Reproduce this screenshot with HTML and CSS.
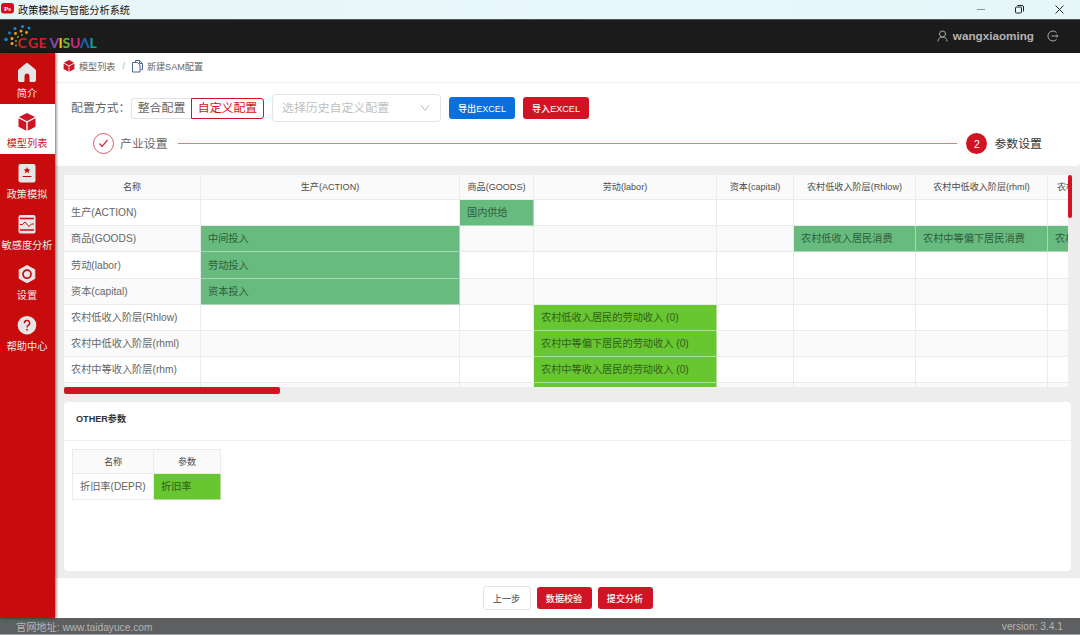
FILE: index.html
```
<!DOCTYPE html>
<html lang="zh-CN">

<head>
  <meta charset="UTF-8" />
  <meta name="viewport" content="width=device-width, initial-scale=1.0"/>
  <title>政策模拟与智能分析系统</title>
  <link rel="stylesheet" href="styles.css">
</head>

<body>

  <!-- Window title bar -->
  <div class="titlebar">
    <svg class="app-icon" width="13" height="12" viewBox="0 0 13 12"><rect width="13" height="10.500" rx="3" fill="#d00f1c"/><text x="6.500" y="7.700" text-anchor="middle" class="app-icon-text">Ps</text></svg>
    <span class="window-title">政策模拟与智能分析系统</span>
    <svg class="window-buttons" width="90" height="19" viewBox="0 0 90 19" fill="none" stroke="#222">
      <path d="M1 9.500h8" stroke="#8b9698"/>
      <rect x="39.500" y="7" width="6" height="6" rx="1"/>
      <path d="M41.500 5.500h4.500q1.500 0 1.500 1.500v4.500"/>
      <path d="M79.500 5.500l8 8M87.500 5.500l-8 8"/>
    </svg>
  </div>

  <header>
    <svg class="logo" width="100" height="33" viewBox="0 0 100 33">
      <g fill="#1788d8"><circle cx="6" cy="19.500" r="1.800"/><circle cx="9.500" cy="13" r="1.400"/><circle cx="15" cy="8.500" r="1.500"/><circle cx="22.500" cy="6.500" r="1.600"/><circle cx="29" cy="8" r="1.500"/></g>
      <g fill="#f5a316"><circle cx="12" cy="18.500" r="1.500"/><circle cx="15.500" cy="13.500" r="1.400"/><circle cx="21" cy="11" r="1.500"/><circle cx="26.500" cy="12.500" r="1.400"/><circle cx="12" cy="23.500" r="1.500"/></g>
      <g fill="#72b52b"><circle cx="16" cy="21" r="1"/><circle cx="18" cy="17" r="1"/><circle cx="22" cy="15" r=".9"/><circle cx="16" cy="25.500" r="1"/></g>
      <text y="28" class="logo-text">
        <tspan x="17.500" fill="#d81e2c">C</tspan><tspan x="28" fill="#d81e2c">G</tspan><tspan x="38.500" fill="#d81e2c">E</tspan>
        <tspan x="49.500" fill="#9147a8">V</tspan><tspan x="58.500" fill="#f4c51c">I</tspan><tspan x="62.500" fill="#69b52c">S</tspan><tspan x="70" fill="#d52783">U</tspan><tspan x="80" fill="#1666b8">Λ</tspan><tspan x="89.500" fill="#13a0a5">L</tspan>
      </text>
    </svg>
    <div class="user">
      <svg width="11" height="12" viewBox="0 0 11 12" fill="none" stroke="#aaa"><circle cx="5.500" cy="4" r="3"/><path d="M1 11.500c0-3 2-4.500 4.500-4.500s4.500 1.500 4.500 4.500"/></svg>
      <span class="username">wangxiaoming</span>
      <svg width="13" height="12" viewBox="0 0 13 12" fill="none" stroke="#aaa"><path d="M10.500 2.500a5 5 0 1 0 0 7M5.500 6h6.500M10.500 4.500l1.500 1.500-1.500 1.500"/></svg>
    </div>
  </header>

  <div class="layout">
    <nav>
      <a class="nav-item">
        <svg width="20" height="20" viewBox="0 0 20 20"><path d="M10 1L1.500 8v10.500q0 1 1 1H7v-5.500a3 3 0 0 1 6 0v5.500h4.500q1 0 1-1V8z" fill="#e6e6e6" stroke="#e6e6e6" stroke-linejoin="round"/></svg>
        <span>简介</span>
      </a>
      <a class="nav-item active">
        <svg width="20" height="20" viewBox="0 0 20 20" fill="#d01423"><path d="M10 1l8 4-8 4.200L2 5zM1.500 6.300l7.800 4v8.500L1.500 14.700zM18.500 6.300l-7.800 4v8.500l7.800-4.100z"/></svg>
        <span>模型列表</span>
      </a>
      <a class="nav-item">
        <svg width="20" height="20" viewBox="0 0 20 20"><rect x="1.500" y="1" width="17" height="18.500" rx="2" fill="#e6e6e6"/><path d="M10 4l1 2.200 2.400.2-1.800 1.600.5 2.300L10 9.100l-2.100 1.200.5-2.300-1.800-1.600L9 6.200z" fill="#c80b0d"/><path d="M5.500 13.500h9" stroke="#c80b0d"/></svg>
        <span>政策模拟</span>
      </a>
      <a class="nav-item">
        <svg width="20" height="20" viewBox="0 0 20 20" fill="none" stroke="#c80b0d"><rect x="1.500" y="1" width="17" height="18.500" rx="2" fill="#e6e6e6" stroke="none"/><path d="M3 4.500h14M3 16h14" stroke-width="1.300"/><path d="M3 10.500h2.500l2.500-2.500 4 4.500 2.500-2.500H17"/></svg>
        <span>敏感度分析</span>
      </a>
      <a class="nav-item">
        <svg width="20" height="20" viewBox="0 0 20 20"><path d="M10 1.500l7.800 4.300v8.700L10 18.800l-7.800-4.300V5.800z" fill="#e6e6e6" stroke="#e6e6e6" stroke-linejoin="round"/><circle cx="10" cy="10.200" r="4" fill="none" stroke="#c80b0d" stroke-width="1.700"/></svg>
        <span>设置</span>
      </a>
      <a class="nav-item">
        <svg width="20" height="20" viewBox="0 0 20 20"><circle cx="10" cy="10.200" r="9.300" fill="#e6e6e6"/><path d="M7.400 8.200a2.600 2.600 0 1 1 3.800 2.200q-1.200.6-1.200 2" fill="none" stroke="#c80b0d" stroke-width="1.400"/><circle cx="10" cy="14.700" r=".9" fill="#c80b0d"/></svg>
        <span>帮助中心</span>
      </a>
    </nav>

    <main>
      <div class="breadcrumb">
        <svg width="12" height="12" viewBox="0 0 20 20" fill="#d01423"><path d="M10 0l8.500 4.500L10 9 1.500 4.500zM1 6l8.300 4.300v9.200L1 15zM19 6l-8.300 4.300v9.200L19 15z"/></svg>
        <span>模型列表</span>
        <span class="slash">/</span>
        <svg width="11" height="13" viewBox="0 0 11 13" fill="none" stroke="#4c6896"><path d="M3.500 2.500V.5h4l3 3v6h-2M7.500.5v3h3"/><path d="M.5 2.500h5l2.500 2.500v7H.5z"/></svg>
        <span>新建SAM配置</span>
      </div>

      <section class="config">
        <div class="config-row">
          <span class="config-label">配置方式：</span>
          <div class="radio-group">
            <span class="radio">整合配置</span>
            <span class="radio checked">自定义配置</span>
          </div>
          <div class="select">
            <span>选择历史自定义配置</span>
            <svg width="10" height="8" viewBox="0 0 10 8" fill="none" stroke="#bbb"><path d="M1 1l4 5.500L9 1"/></svg>
          </div>
          <button class="btn blue">导出EXCEL</button>
          <button class="btn red">导入EXCEL</button>
        </div>
        <div class="steps">
          <span class="step-icon done"><svg width="11" height="9" viewBox="0 0 11 9" fill="none" stroke="#d6303e" stroke-width="1.300"><path d="M1.500 4.500L4 7.500 9.500 1"/></svg></span>
          <span class="step-title">产业设置</span>
          <span class="step-line"></span>
          <span class="step-icon current">2</span>
          <span class="step-title now">参数设置</span>
        </div>
      </section>

      <!-- SAM matrix -->
      <section class="matrix">
        <div class="table-view">
          <table class="sam">
            <colgroup><col class="c-name"><col class="c-action"><col class="c-goods"><col class="c-labor"><col class="c-capital"><col class="c-low"><col class="c-rhml"><col class="c-rhm"></colgroup>
            <thead>
              <tr><th>名称</th><th>生产(ACTION)</th><th>商品(GOODS)</th><th>劳动(labor)</th><th>资本(capital)</th><th>农村低收入阶层(Rhlow)</th><th>农村中低收入阶层(rhml)</th><th class="cut">农村</th></tr>
            </thead>
            <tbody>
              <tr><td>生产(ACTION)</td><td></td><td class="green">国内供给</td><td></td><td></td><td></td><td></td><td></td></tr>
              <tr><td>商品(GOODS)</td><td class="green">中间投入</td><td></td><td></td><td></td><td class="green">农村低收入居民消费</td><td class="green">农村中等偏下居民消费</td><td class="green">农村</td></tr>
              <tr class="tall"><td>劳动(labor)</td><td class="green">劳动投入</td><td></td><td></td><td></td><td></td><td></td><td></td></tr>
              <tr><td>资本(capital)</td><td class="green">资本投入</td><td></td><td></td><td></td><td></td><td></td><td></td></tr>
              <tr><td>农村低收入阶层(Rhlow)</td><td></td><td></td><td class="lime">农村低收入居民的劳动收入 (0)</td><td></td><td></td><td></td><td></td></tr>
              <tr><td>农村中低收入阶层(rhml)</td><td></td><td></td><td class="lime">农村中等偏下居民的劳动收入 (0)</td><td></td><td></td><td></td><td></td></tr>
              <tr><td>农村中等收入阶层(rhm)</td><td></td><td></td><td class="lime">农村中等收入居民的劳动收入 (0)</td><td></td><td></td><td></td><td></td></tr>
              <tr><td></td><td></td><td></td><td class="lime"></td><td></td><td></td><td></td><td></td></tr>
            </tbody>
          </table>
        </div>
        <div class="scroll-v"></div>
        <div class="scroll-h"></div>
      </section>

      <section class="card">
        <h2>OTHER参数</h2>
        <div class="card-body">
          <table class="other">
            <colgroup><col class="c-depr"><col class="c-value"></colgroup>
            <thead><tr><th>名称</th><th>参数</th></tr></thead>
            <tbody><tr><td>折旧率(DEPR)</td><td class="lime">折旧率</td></tr></tbody>
          </table>
        </div>
      </section>

      <div class="actions">
        <button class="btn plain">上一步</button>
        <button class="btn red">数据校验</button>
        <button class="btn red">提交分析</button>
      </div>
    </main>
  </div>

  <footer>
    <span>官网地址: www.taidayuce.com</span>
    <span>version: 3.4.1</span>
  </footer>

</body>
</html>
```
FILE: styles.css
```
:root {
  --red: #d01423;
  --nav-red: #c80b0d;
  --green: #68bb7f;
  --lime: #68c630;
  --line: #ebebeb;
}

* {
  margin: 0;
  padding: 0;
  box-sizing: border-box;
}

body {
  width: 1080px;
  height: 635px;
  overflow: hidden;
  display: flex;
  flex-direction: column;
  font-family: 'Liberation Sans', 'Noto Sans CJK SC', sans-serif;
  font-size: 10.2px;
  color: #666;
  background: #fff;
}

svg {
  flex: none;
  display: block;
}

.titlebar {
  height: 19px;
  flex: none;
  display: flex;
  align-items: center;
  background: linear-gradient(90deg, #e7f4f6, #e9f8fc 50%, #e6f5f8);
  padding: 0 14px 1px 1px;
  color: #111;
}

.app-icon-text {
  font: bold 7px 'Liberation Serif', serif;
  fill: #fff;
}

.window-title {
  margin-left: 4px;
  flex: 1;
}

header {
  height: 34px;
  flex: none;
  display: flex;
  justify-content: space-between;
  background: #1b1b1b;
  border-top: 1px solid #4d5657;
  padding-right: 21px;
}

.logo-text {
  font-family: Lato, 'Liberation Sans', sans-serif;
  font-size: 14px;
  font-weight: bold;
}

.user {
  display: flex;
  align-items: center;
  padding-bottom: 2px;
  color: #b3b3b3;
}

.username {
  font-size: 11.7px;
  font-weight: bold;
  margin: 0 12px 0 5px;
}

.layout {
  flex: 1;
  min-height: 0;
  display: flex;
}

nav {
  width: 55px;
  flex: none;
  background: var(--nav-red);
  box-shadow: 1px 0 3px rgba(0, 0, 0, 0.6);
  z-index: 1;
}

.nav-item {
  height: 50.7px;
  display: flex;
  flex-direction: column;
  align-items: center;
  padding: 8.5px 1px 0 0;
  color: #eee;
  line-height: 15px;
  white-space: nowrap;
}

.nav-item span {
  margin-top: 4px;
}

.nav-item.active {
  background: #fff;
  color: var(--red);
}

main {
  flex: 1;
  min-width: 0;
  display: flex;
  flex-direction: column;
  background: #ededed;
}

.breadcrumb {
  height: 30px;
  flex: none;
  display: flex;
  align-items: center;
  background: #fff;
  border-bottom: 1px solid #f0f0f0;
  padding: 0 0 3px 8px;
  font-size: 9.1px;
}

.breadcrumb span {
  margin-left: 4px;
}

.breadcrumb .slash {
  margin: 0 7px;
  color: #aaa;
}

.config {
  height: 83px;
  flex: none;
  background: #fff;
  padding: 11px 31px 0 16px;
  font-size: 11.9px;
  border-radius: 0 0 4px 4px;
}

.config-row {
  display: flex;
  align-items: center;
  height: 28px;
}

.config-label {
  width: 60px;
  padding-bottom: 3px;
  white-space: nowrap;
}

.radio-group {
  display: flex;
  height: 21px;
  line-height: 19px;
}

.radio {
  width: 60px;
  text-align: center;
  border: 1px solid #e3e3e3;
  border-right: none;
  border-radius: 3px 0 0 3px;
}

.radio.checked {
  width: 73px;
  border: 1px solid var(--red);
  border-radius: 0 3px 3px 0;
  color: var(--red);
}

.select {
  width: 169px;
  height: 28px;
  margin: 0 8px;
  padding: 0 10px 0 9px;
  display: flex;
  align-items: center;
  justify-content: space-between;
  border: 1px solid #e3e3e3;
  border-radius: 4px;
  color: #bfbfbf;
}

.select span {
  padding-bottom: 3px;
}

.btn {
  height: 22px;
  border: none;
  border-radius: 3px;
  padding-bottom: 1px;
  color: #fff;
  font-family: inherit;
  font-size: 9.1px;
  font-weight: 500;
}

.blue {
  width: 66px;
  background: #0a6edc;
}

.red {
  width: 66px;
  background: var(--red);
}

.blue + .red {
  margin-left: 8px;
}

.steps {
  display: flex;
  align-items: center;
  height: 21px;
  margin: 11px 0 0 22px;
}

.step-icon {
  width: 21px;
  height: 21px;
  border-radius: 50%;
  display: flex;
  align-items: center;
  justify-content: center;
}

.step-icon.done {
  border: 1px solid #dc5a65;
}

.step-icon.current {
  background: var(--red);
  color: #fff;
  font-size: 10.5px;
}

.step-title {
  margin-left: 6px;
  padding-bottom: 3px;
}

.step-title.now {
  color: #333;
  margin: 0 7px 0 7px;
}

.step-line {
  flex: 1;
  height: 1px;
  background: #e8747c;
  margin: 0 9px 0 10px;
}

.matrix {
  height: 236px;
  flex: none;
  padding: 9px 8px 0 9px;
  display: grid;
  grid-template-columns: 1004px 4px;
  grid-template-rows: 212px 7px;
}

.table-view {
  overflow: hidden;
  background: #fff;
}

table {
  table-layout: fixed;
  border-collapse: separate;
  border-spacing: 0;
  white-space: nowrap;
}

.sam {
  width: 1121px;
}

.c-name { width: 137px; }
.c-action { width: 259px; }
.c-goods { width: 74px; }
.c-labor { width: 183px; }
.c-capital { width: 77px; }
.c-low { width: 122px; }
.c-rhml { width: 132px; }
.c-rhm { width: 137px; }

th {
  height: 25px;
  padding-bottom: 2px;
  background: #fafafa;
  border-right: 1px solid var(--line);
  border-bottom: 1px solid var(--line);
  font-size: 9.1px;
  font-weight: normal;
  color: #4d4d4d;
}

th.cut {
  text-align: left;
  padding-left: 9px;
}

td {
  height: 26px;
  padding: 0 7px 2px;
  border-right: 1px solid var(--line);
  border-bottom: 1px solid var(--line);
}

.tall td {
  height: 27px;
}

.sam tbody tr:nth-child(even) td {
  background: #fafafa;
}

.sam tbody tr td.green {
  background: var(--green);
  border-color: #a9d6b4;
  color: #2f5c3b;
}

.sam tbody tr td.lime,
.other td.lime {
  background: var(--lime);
  border-color: #b3dc9c;
  color: #2f611a;
}

.scroll-v {
  height: 43px;
  background: var(--red);
  border-radius: 2px;
}

.scroll-h {
  width: 216px;
  background: var(--red);
  border-radius: 2px;
}

.card {
  height: 169px;
  flex: none;
  margin: 0 9px 7px 9px;
  background: #fff;
  border-radius: 4px;
}

.card h2 {
  height: 39px;
  line-height: 35px;
  padding-left: 12px;
  border-bottom: 1px solid #f0f0f0;
  font-size: 9.1px;
  color: #333;
}

.card-body {
  padding: 8px;
}

.other {
  width: 149px;
  border-left: 1px solid var(--line);
}

.other th {
  border-top: 1px solid var(--line);
}

.c-depr { width: 81px; }
.c-value { width: 67px; }

.actions {
  flex: 1;
  display: flex;
  justify-content: center;
  align-items: center;
  gap: 6px;
  background: #fff;
}

.actions .red {
  width: 55px;
}

.plain {
  width: 48px;
  height: 24px;
  background: #fff;
  border: 1px solid #e3e3e3;
  color: #666;
}

footer {
  height: 17px;
  flex: none;
  display: flex;
  justify-content: space-between;
  align-items: center;
  background: #5d5f61;
  border-bottom: 1px solid #98a2a0;
  padding: 0 17px 0 16px;
  color: #b5b5b5;
}
```
